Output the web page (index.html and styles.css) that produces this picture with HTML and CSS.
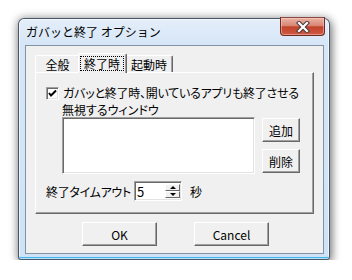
FILE: index.html
```html
<!DOCTYPE html>
<html lang="ja">
<head>
  <meta charset="UTF-8">
  <title>ガバッと終了 オプション</title>
  <link rel="stylesheet" href="styles.css">
</head>
<body>
  <div class="window">
    <div class="titlebar">
      <span class="title">ガバッと終了 オプション</span>
      <div class="close">
        <svg width="14" height="12" viewBox="0 0 14 12">
          <path d="M3 2 L11 10 M11 2 L3 10" stroke="#4a3a3a" stroke-width="4.2" stroke-linecap="square"/>
          <path d="M3 2 L11 10 M11 2 L3 10" stroke="#fff" stroke-width="2.2" stroke-linecap="square"/>
        </svg>
      </div>
    </div>

    <div class="client">
      <div class="tabs">
        <div class="tab tab-general">全般</div>
        <div class="tab active"><span class="focus">終了時</span></div>
        <div class="tab tab-start">起動時</div>
      </div>

      <div class="panel">
        <div class="check-row">
          <span class="checkbox">
            <svg width="9" height="9" viewBox="0 0 9 9">
              <path d="M1 4 L3 6.5 L8 1.5" stroke="#000" stroke-width="2" fill="none"/>
            </svg>
          </span>
          <span>ガバッと終了時、開いているアプリも終了させる</span>
        </div>

        <div class="list-label">無視するウィンドウ</div>
        <div class="list-row">
          <div class="listbox"></div>
          <div class="side-buttons">
            <button class="btn small">追加</button>
            <button class="btn small">削除</button>
          </div>
        </div>

        <div class="timeout-row">
          <span class="timeout-label">終了タイムアウト</span>
          <div class="spin-edit">
            <span class="spin-value">5</span>
            <div class="spin">
              <div class="spin-btn"><span class="arrow-up"></span></div>
              <div class="spin-btn"><span class="arrow-down"></span></div>
            </div>
          </div>
          <span class="unit">秒</span>
        </div>
      </div>

      <div class="footer">
        <button class="btn wide">OK</button>
        <button class="btn wide">Cancel</button>
      </div>
    </div>
  </div>
</body>
</html>
```

FILE: styles.css
```css
body {
  margin: 0;
  background: #fff;
  font-family: "Noto Sans CJK JP", sans-serif;
  font-size: 12px;
  color: #000;
}

.window {
  margin: 18px 0 0 18px;
  width: 310px;
  height: 240px;
  border: 1px solid rgba(35, 50, 68, 0.8);
  border-radius: 6px 6px 3px 3px;
  background: linear-gradient(to bottom, #e4eef9 0, #d6e6f7 26px, #cfe2f6 100%);
  box-shadow: 0 0 9px 1px rgba(0, 0, 0, 0.3), 2px 4px 10px rgba(0, 0, 0, 0.35),
    inset 0 0 0 1px rgba(255, 255, 255, 0.6), inset 0 -2px 0 #45b4ea;
  display: flex;
  flex-direction: column;
}

.titlebar {
  height: 26px;
  display: flex;
  align-items: center;
  padding-left: 7px;
}

.title {
  flex: 1;
  line-height: 12px;
}

.close {
  align-self: flex-start;
  margin: -2px 4px 0 0;
  width: 43px;
  height: 17px;
  border: 1px solid #6b2b22;
  border-top-color: #8a4a40;
  border-radius: 0 0 4px 4px;
  background: linear-gradient(to bottom, #eab3a5 0, #d98573 45%, #c2432c 52%, #cf5a42 100%);
  box-shadow: inset 0 0 0 1px rgba(255, 220, 210, 0.45);
  display: flex;
  align-items: center;
  justify-content: center;
}

.client {
  flex: 1;
  margin: 0 5px 5px 6px;
  border: 1px solid #8393a6;
  background: #f0f0f0;
  display: flex;
  flex-direction: column;
}

/* tab strip */
.tabs {
  display: flex;
  align-items: flex-end;
  height: 20px;
  padding: 7px 0 0 9px;
  margin-bottom: -1px;
  position: relative;
  z-index: 1;
}

.tab {
  box-sizing: border-box;
  height: 17px;
  margin-bottom: 1px;
  border-top: 1px solid #fff;
  border-left: 1px solid #fff;
  border-right: 1px solid #696969;
  border-radius: 2px 2px 0 0;
  box-shadow: inset -1px 0 #a0a0a0;
  text-align: center;
  line-height: 12px;
  padding-top: 3px;
  background: #f0f0f0;
}

.tab-general {
  width: 45px;
}

.tab-start {
  width: 48px;
}

.tab.active {
  width: 49px;
  height: 20px;
  margin: 0 -2px;
  padding: 2px 2px 0 1px;
  position: relative;
  z-index: 2;
}

.focus {
  display: block;
  height: 15px;
  padding-top: 2px;
  box-sizing: border-box;
  outline: 1px dotted #000;
  outline-offset: -1px;
}

.panel {
  box-sizing: border-box;
  height: 142px;
  margin: 0 9px;
  padding: 12px 0 0 10px;
  border: 1px solid;
  border-color: #fff #696969 #696969 #fff;
  box-shadow: inset -1px -1px #a0a0a0;
}

.check-row {
  display: flex;
  height: 15px;
  line-height: 15px;
  letter-spacing: -0.25px;
  font-feature-settings: "palt";
}

.checkbox,
.listbox,
.spin-edit {
  box-sizing: border-box;
  background: #fff;
  border: 1px solid;
  border-color: #a0a0a0 #fff #fff #a0a0a0;
  box-shadow: inset 1px 1px #696969, inset -1px -1px #e3e3e3;
}

.checkbox {
  width: 13px;
  height: 13px;
  margin: 2px 4px 0 0;
  display: flex;
  align-items: center;
  justify-content: center;
}

.list-label {
  margin: 2px 0 0 16px;
  line-height: 15px;
  font-feature-settings: "palt";
}

.list-row {
  display: flex;
  margin-left: 16px;
}

.listbox {
  width: 193px;
  height: 57px;
}

.side-buttons {
  display: flex;
  flex-direction: column;
  gap: 7px;
  margin: 1px 0 0 7px;
}

.btn {
  box-sizing: border-box;
  height: 24px;
  padding: 0;
  font-family: "Noto Sans CJK JP", sans-serif;
  font-size: 12px;
  color: #000;
  background: #f0f0f0;
  border: 1px solid;
  border-color: #fff #696969 #696969 #fff;
  box-shadow: inset -1px -1px #a0a0a0;
}

.btn.small {
  width: 38px;
}

.btn.wide {
  width: 75px;
}

.timeout-row {
  display: flex;
  align-items: center;
  margin-top: 7px;
  font-feature-settings: "palt";
}

.timeout-label {
  width: 88px;
  letter-spacing: -0.3px;
}

.spin-edit {
  width: 48px;
  height: 20px;
  display: flex;
  padding: 2px 1px 2px 2px;
}

.spin-value {
  flex: 1;
  line-height: 16px;
  font-size: 13px;
}

.spin {
  width: 15px;
  display: flex;
  flex-direction: column;
}

.spin-btn {
  box-sizing: border-box;
  flex: 1;
  background: #f0f0f0;
  border: 1px solid;
  border-color: #fff #696969 #696969 #fff;
  display: flex;
  align-items: center;
  justify-content: center;
}

.arrow-up,
.arrow-down {
  width: 0;
  height: 0;
  border-left: 3px solid transparent;
  border-right: 3px solid transparent;
}

.arrow-up {
  border-bottom: 3px solid #000;
}

.arrow-down {
  border-top: 3px solid #000;
}

.unit {
  margin-left: 8px;
}

.footer {
  display: flex;
  gap: 37px;
  margin-top: 8px;
  padding-left: 56px;
}
```
